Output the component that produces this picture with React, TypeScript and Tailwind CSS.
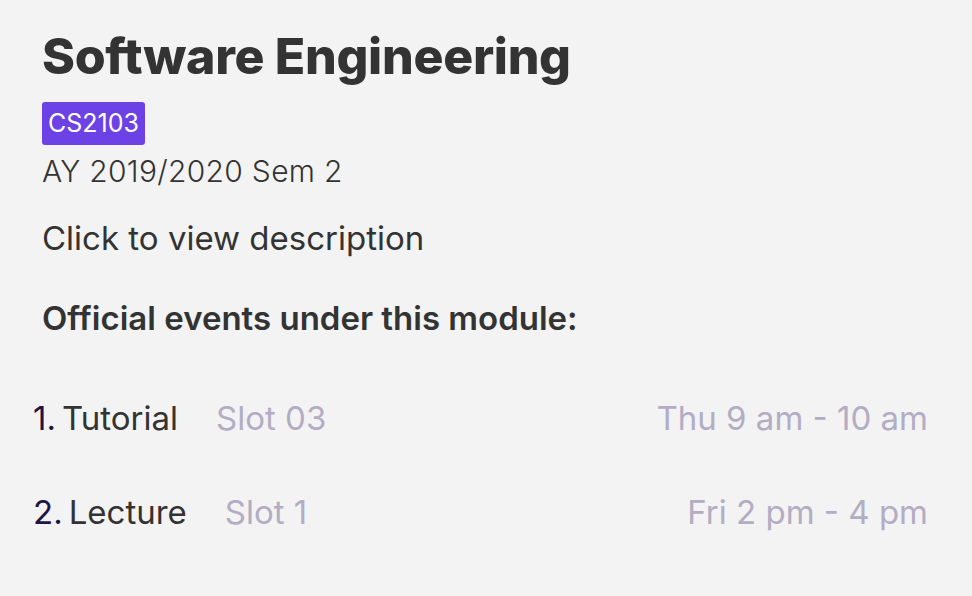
import React from 'react';

const events = [
  { num: '1.', type: 'Tutorial', slot: 'Slot 03', time: 'Thu 9 am - 10 am' },
  { num: '2.', type: 'Lecture', slot: 'Slot 1', time: 'Fri 2 pm - 4 pm' },
];

export default function App() {
  return (
    <div
      className="min-h-screen w-full bg-[#f3f3f3] text-[#333333]"
      style={{ fontFamily: 'Inter, "Noto Sans", sans-serif' }}
    >
      <div className="pl-[42px] pr-[44px] pt-[26px]">
        {/* Module header */}
        <h1 className="text-[50px] font-extrabold leading-[60px] tracking-[-0.3px]">Software Engineering</h1>
        <div className="mt-[16px]">
          <span className="inline-block rounded-[3px] bg-[#6c42e6] px-[6px] py-[4px] text-[25px] leading-[35px] text-white">
            CS2103
          </span>
        </div>
        <div className="mt-[6px] text-[30px] font-light leading-[40px] tracking-[0.3px]">AY 2019/2020 Sem 2</div>

        <div className="mt-[27px] cursor-pointer text-[33px] leading-[40px]">Click to view description</div>

        <div className="mt-[40px] text-[33px] font-semibold leading-[40px]">Official events under this module:</div>

        {/* Events list */}
        <ul className="mt-[60px] -ml-[9px] flex flex-col gap-[54px]">
          {events.map((e) => (
            <li key={e.num} className="flex items-center justify-between text-[33px] leading-[40px]">
              <div className="flex items-center">
                <span className="text-[#1e1545]">{e.num}</span>
                <span className="ml-[6px]">{e.type}</span>
                <span className="ml-[38px] text-[#b3adc4]">{e.slot}</span>
              </div>
              <span className="text-[#b3adc4]">{e.time}</span>
            </li>
          ))}
        </ul>
      </div>
    </div>
  );
}
